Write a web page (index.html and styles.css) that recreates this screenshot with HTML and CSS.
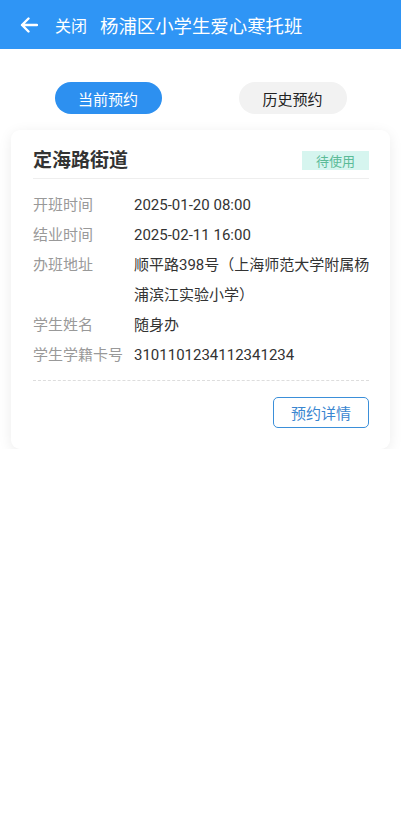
FILE: index.html
```html
<!DOCTYPE html>
<html lang="zh">
<head>
<meta charset="utf-8">
<link rel="stylesheet" href="styles.css">
</head>
<body>
<header class="topbar">
  <svg class="back" width="18" height="16" viewBox="0 0 18 16"><path d="M17 8H2M8.5 1.5L2 8l6.5 6.5" fill="none" stroke="#fff" stroke-width="2.4" stroke-linecap="round" stroke-linejoin="round"/></svg>
  <span class="close">关闭</span>
  <span class="title">杨浦区小学生爱心寒托班</span>
</header>
<div class="tabs">
  <div class="tab active">当前预约</div>
  <div class="tab">历史预约</div>
</div>
<div class="card">
  <div class="card-head">
    <div class="card-title">定海路街道</div>
    <div class="badge">待使用</div>
  </div>
  <div class="rows">
    <div class="row"><div class="label">开班时间</div><div class="value">2025-01-20 08:00</div></div>
    <div class="row"><div class="label">结业时间</div><div class="value">2025-02-11 16:00</div></div>
    <div class="row"><div class="label">办班地址</div><div class="value">顺平路398号（上海师范大学附属杨浦滨江实验小学）</div></div>
    <div class="row"><div class="label">学生姓名</div><div class="value">随身办</div></div>
    <div class="row"><div class="label">学生学籍卡号</div><div class="value">3101101234112341234</div></div>
  </div>
  <div class="card-foot">
    <div class="btn">预约详情</div>
  </div>
</div>
</body>
</html>
```

FILE: styles.css
```css
* { box-sizing: border-box; }
body {
  margin: 0;
  background: #fff;
  font-family: Roboto, "Noto Sans CJK SC", "Noto Sans", sans-serif;
  color: #333;
}
.topbar {
  height: 49px;
  background: #2f95f5;
  display: flex;
  align-items: center;
  padding-left: 20px;
  color: #fff;
}
.back { display: block; margin-right: 17px; }
.close { font-size: 16px; margin-right: 13px; }
.title { font-size: 18.4px; }
.tabs {
  display: flex;
  justify-content: center;
  gap: 77px;
  margin-top: 33px;
}
.tab {
  width: 108px;
  height: 32px;
  border-radius: 16px;
  background: #f2f2f2;
  font-size: 15px;
  color: #222;
  display: flex;
  align-items: center;
  justify-content: center;
}
.tab.active { background: #2d90f0; color: #fff; width: 107px; }
.card {
  margin: 16px 11px 0;
  background: #fff;
  border-radius: 9px;
  box-shadow: 0 3px 14px rgba(0,0,0,0.08);
  padding: 18px 21px 21px 22px;
}
.card-head {
  display: flex;
  justify-content: space-between;
  align-items: center;
  height: 31px;
  padding-bottom: 5px;
  border-bottom: 1px solid #eeeeee;
}
.card-title { font-size: 19px; font-weight: bold; color: #333; line-height: 26px; }
.badge {
  width: 67px;
  height: 19px;
  background: #d6f5ef;
  color: #5bbb97;
  font-size: 13px;
  display: flex;
  align-items: center;
  justify-content: center;
}
.rows { padding-top: 11px; padding-bottom: 10px; border-bottom: 1px dashed #dddddd; }
.row { display: flex; font-size: 15px; line-height: 30px; }
.label { width: 101px; flex-shrink: 0; color: #999; }
.value { flex: 1; color: #333; margin-right: -8px; }
.card-foot { display: flex; justify-content: flex-end; padding-top: 16px; }
.btn {
  width: 96px;
  height: 31px;
  border: 1px solid #3b8fd9;
  border-radius: 5px;
  color: #3a86d0;
  font-size: 15px;
  display: flex;
  align-items: center;
  justify-content: center;
}
```
